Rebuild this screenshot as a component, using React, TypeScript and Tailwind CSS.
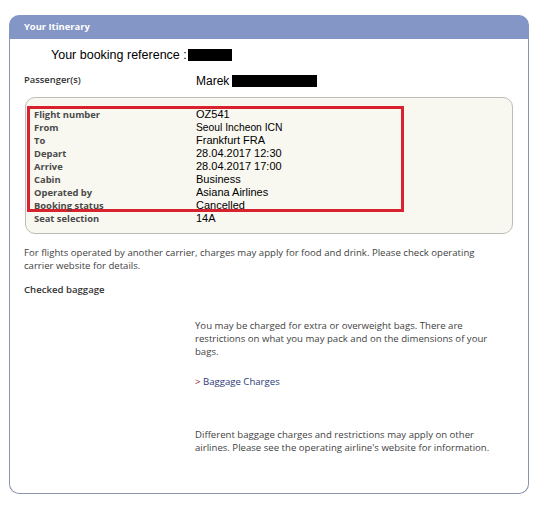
import React from "react";

const rows: [string, string, string?][] = [
  ["Flight number", "OZ541"],
  ["From", "Seoul Incheon ICN", "text-[10.3px]"],
  ["To", "Frankfurt FRA"],
  ["Depart", "28.04.2017 12:30"],
  ["Arrive", "28.04.2017 17:00"],
  ["Cabin", "Business"],
  ["Operated by", "Asiana Airlines"],
  ["Booking status", "Cancelled"],
];

const labelFont = { fontFamily: '"Open Sans", "Noto Sans", sans-serif' };
const valueFont = { fontFamily: '"Liberation Sans", Arial, sans-serif' };

function Row({ label, value, size }: { label: string; value: string; size?: string }) {
  return (
    <div className="flex h-[13px] items-center">
      <div className="w-[162px] text-[9.4px] font-bold leading-[13px] text-[#4a4a4a]" style={labelFont}>
        {label}
      </div>
      <div className={`${size ?? "text-[11px]"} leading-[13px] text-black`} style={valueFont}>
        {value}
      </div>
    </div>
  );
}

export default function App() {
  return (
    <div className="h-[506px] w-[542px] bg-white pl-[9px] pt-[15px]" style={labelFont}>
      <div className="w-[520px]">
        <div className="flex h-[24px] items-center rounded-t-[10px] bg-[#8496c5] pl-[15px] text-[9.4px] font-bold text-white">
          Your Itinerary
        </div>
        <div className="h-[455px] rounded-b-[10px] border border-t-0 border-[#8a93ad] pl-[14px] pr-[14px]">
          <div className="flex h-[30px] items-center pl-[27px] pt-[2px]">
            <span className="text-[12.5px] text-black" style={valueFont}>
              Your booking reference :
            </span>
            <span className="ml-[1px] inline-block h-[12px] w-[44px] bg-black" />
          </div>
          <div className="flex h-[20px] items-center pt-[3px]">
            <div className="w-[172px] text-[9.4px] font-semibold text-[#333]">Passenger(s)</div>
            <span className="text-[12px] text-black" style={valueFont}>
              Marek
            </span>
            <span className="ml-[3px] inline-block h-[12px] w-[85px] bg-black" />
          </div>
          <div className="ml-[1px] mt-[8px] h-[137px] w-[488px] rounded-[10px] border border-[#bdbdb5] bg-[#f8f7f0] pl-[1px] pt-[8px]">
            <div className="h-[106px] w-[377px] border-[3px] border-[#d8232e] pl-[4px]">
              <div className="-mt-[1px]">
                {rows.map(([l, v, s]) => (
                  <Row key={l} label={l} value={v} size={s} />
                ))}
              </div>
            </div>
            <div className="pl-[7px]">
              <Row label="Seat selection" value="14A" />
            </div>
          </div>
          <p className="mt-[12px] text-[9.6px] leading-[13px] text-[#3f3f3f]">
            For flights operated by another carrier, charges may apply for food and drink. Please check operating
            <br />
            carrier website for details.
          </p>
          <p className="mt-[11px] text-[9.6px] font-semibold text-[#333]">Checked baggage</p>
          <div className="ml-[171px] mt-[22px] text-[9.6px] leading-[13px] text-[#3f3f3f]">
            <p>
              You may be charged for extra or overweight bags. There are
              <br />
              restrictions on what you may pack and on the dimensions of your
              <br />
              bags.
            </p>
            <p className="mt-[17px]">
              <span className="text-[#8b1d1d]">&gt;</span>{" "}
              <span className="text-[#2c3a78]">Baggage Charges</span>
            </p>
            <p className="mt-[40px]">
              Different baggage charges and restrictions may apply on other
              <br />
              airlines. Please see the operating airline's website for information.
            </p>
          </div>
        </div>
      </div>
    </div>
  );
}
